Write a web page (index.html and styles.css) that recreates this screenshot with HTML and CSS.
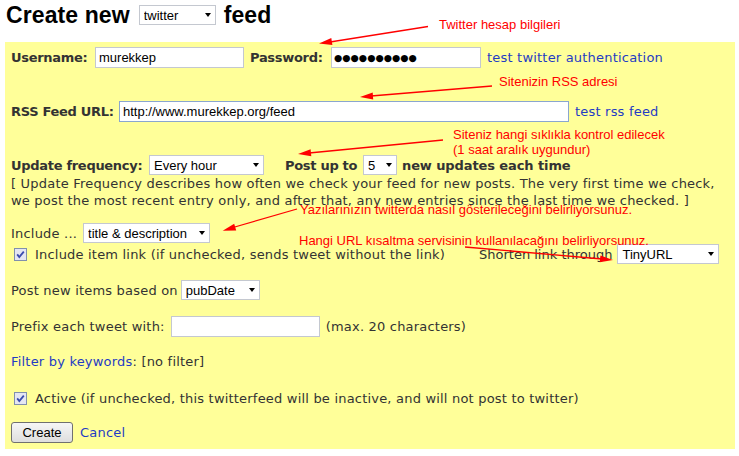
FILE: index.html
```html
<!DOCTYPE html>
<html>
<head>
<meta charset="utf-8">
<title>Create new twitter feed</title>
<link rel="stylesheet" href="styles.css">
</head>
<body>
<div class="page">
  <h1 class="title">
    <span class="t-create">Create new</span>
    <span class="sel sel-type"><select><option>twitter</option></select></span>
    <span class="t-feed">feed</span>
  </h1>

  <form class="panel">
    <div class="row r-user">
      <label class="lbl lbl-user">Username:</label>
      <input class="txt w-user" type="text" value="murekkep">
      <label class="lbl lbl-pass">Password:</label>
      <input class="txt w-pass dots" type="text" value="●●●●●●●●●●">
      <a class="lnk lnk-auth" href="#">test twitter authentication</a>
    </div>

    <div class="row r-rss">
      <label class="lbl lbl-rss">RSS Feed URL:</label>
      <input class="txt w-url focus" type="text" value="http://www.murekkep.org/feed">
      <a class="lnk lnk-rss" href="#">test rss feed</a>
    </div>

    <div class="row r-freq">
      <label class="lbl lbl-freq">Update frequency:</label>
      <span class="sel sel-freq"><select><option>Every hour</option></select></span>
      <span class="lbl lbl-post">Post up to</span>
      <span class="sel sel-num"><select><option>5</option></select></span>
      <span class="lbl lbl-new">new updates each time</span>
    </div>
    <p class="desc">[ Update Frequency describes how often we check your feed for new posts. The very first time we check,<br>we post the most recent entry only, and after that, any new entries since the last time we checked. ]</p>

    <div class="row r-include">
      <span class="plain">Include ...</span>
      <span class="sel sel-incl"><select><option>title &amp; description</option></select></span>
    </div>

    <div class="row r-link">
      <span class="cb"><svg width="13" height="13" viewBox="0 0 13 13"><rect x="0.5" y="0.5" width="12" height="12" fill="#e4e6f2" stroke="#8190ad"/><path d="M3.2 6.4 L5.3 9 L9.8 3.6" stroke="#3a4cae" stroke-width="1.8" fill="none"/></svg></span>
      <span class="plain incl-text">Include item link (if unchecked, sends tweet without the link)</span>
      <span class="plain shorten">Shorten link through</span>
      <span class="sel sel-short"><select><option>TinyURL</option></select></span>
    </div>

    <div class="row r-post">
      <span class="plain">Post new items based on</span>
      <span class="sel sel-pub"><select><option>pubDate</option></select></span>
    </div>

    <div class="row r-prefix">
      <span class="plain">Prefix each tweet with:</span>
      <input class="txt w-prefix" type="text" value="">
      <span class="plain max">(max. 20 characters)</span>
    </div>

    <div class="row r-filter">
      <span class="plain"><a class="lnk" href="#">Filter by keywords</a>: [no filter]</span>
    </div>

    <div class="row r-active">
      <span class="cb"><svg width="13" height="13" viewBox="0 0 13 13"><rect x="0.5" y="0.5" width="12" height="12" fill="#e4e6f2" stroke="#8190ad"/><path d="M3.2 6.4 L5.3 9 L9.8 3.6" stroke="#3a4cae" stroke-width="1.8" fill="none"/></svg></span>
      <span class="plain">Active (if unchecked, this twitterfeed will be inactive, and will not post to twitter)</span>
    </div>

    <div class="row r-btn">
      <button class="btn" type="button">Create</button>
      <a class="lnk cancel" href="#">Cancel</a>
    </div>
  </form>

  <svg class="arrows" width="739" height="456" viewBox="0 0 739 456">
    <g stroke="#ff0000" stroke-width="1.3" fill="none">
      <line x1="428" y1="26.5" x2="330" y2="42"/>
      <line x1="492" y1="86" x2="371" y2="96"/>
      <line x1="443" y1="140" x2="309" y2="153"/>
      <line x1="297" y1="209" x2="233" y2="227.5"/>
      <line x1="465" y1="247" x2="602" y2="259"/>
    </g>
    <g fill="#ff0000">
      <polygon points="319,43.5 331.3,38 332.4,44.9"/>
      <polygon points="360,97 372.7,92.4 373.2,99.4"/>
      <polygon points="298,154 310.6,149.3 311.3,156.2"/>
      <polygon points="222.7,230.7 234.2,223.7 236.2,230.5"/>
      <polygon points="613,260 599.7,262.3 600.4,255.4"/>
    </g>
  </svg>

  <div class="note n1">Twitter hesap bilgileri</div>
  <div class="note n2">Sitenizin RSS adresi</div>
  <div class="note n3">Siteniz hangi sıklıkla kontrol edilecek<br>(1 saat aralık uygundur)</div>
  <div class="note n4">Yazılarınızın twitterda nasıl gösterileceğini belirliyorsunuz.</div>
  <div class="note n5">Hangi URL kısaltma servisinin kullanılacağını belirliyorsunuz.</div>
</div>
</body>
</html>
```

FILE: styles.css
```css
html, body {
  margin: 0;
  padding: 0;
  background: #ffffff;
}

.page {
  position: relative;
  width: 739px;
  height: 456px;
  overflow: hidden;
  font-family: "DejaVu Sans", Verdana, sans-serif;
  font-size: 13px;
  letter-spacing: 0.2px;
  color: #333333;
}

/* ---------- header ---------- */
.title {
  display: flex;
  align-items: center;
  height: 30px;
  margin: 0 0 12px 0;
  padding-left: 6px;
  font-family: "Liberation Sans", Arial, sans-serif;
  font-size: 23px;
  font-weight: bold;
  letter-spacing: 0.1px;
  color: #000;
  line-height: 26px;
}
.sel-type { margin: 0 8px 0 9px; }
.sel-type select { width: 77px; }

/* ---------- panel ---------- */
.panel {
  width: 730px;
  margin: 0 0 0 5px;
  box-sizing: border-box;
  padding: 5px 6px 6px 6px;
  background: #ffff99;
}

.row {
  display: flex;
  align-items: center;
  white-space: nowrap;
}

.lbl {
  font-weight: bold;
  letter-spacing: -0.3px;
  color: #333;
  flex: none;
}
.lbl-user { width: 84px; }
.lbl-pass { width: 81px; margin-left: 6px; }
.lbl-rss { width: 108px; }
.lbl-freq { width: 138px; }
.lbl-post { width: 78px; margin-left: 21px; }

.plain { color: #333; }

.lnk {
  color: #1f3cc4;
  text-decoration: none;
}

/* inputs */
.txt {
  box-sizing: border-box;
  height: 21px;
  margin: 0;
  padding: 0 0 0 3px;
  border: 1px solid #c4c8d0;
  background: #fff;
  font-family: "Liberation Sans", Arial, sans-serif;
  font-size: 13px;
  letter-spacing: 0;
  color: #000;
  outline: none;
}
.txt.focus { border-color: #8aa6cf; padding-left: 3px; }
.dots {
  font-family: "DejaVu Sans", sans-serif;
  font-size: 9.5px;
  padding-left: 2px;
}

/* selects */
.sel {
  position: relative;
  display: inline-flex;
  flex: none;
}
.sel select {
  -webkit-appearance: none;
  appearance: none;
  box-sizing: border-box;
  height: 20px;
  margin: 0;
  padding: 0 0 0 4px;
  border: 1px solid #c4c8d0;
  border-radius: 0;
  background: #fff;
  font-family: "Liberation Sans", Arial, sans-serif;
  font-size: 13px;
  font-weight: normal;
  letter-spacing: 0;
  color: #000;
}
.sel::after {
  content: "";
  position: absolute;
  right: 5px;
  top: 8px;
  width: 0;
  height: 0;
  border-left: 3.5px solid transparent;
  border-right: 3.5px solid transparent;
  border-top: 4px solid #000;
  pointer-events: none;
}

/* row 1 */
.r-user { height: 21px; }
.w-user { width: 149px; }
.w-pass { width: 150px; }
.lnk-auth { margin-left: 6px; }

/* row 2 */
.r-rss { height: 21px; margin-top: 33px; }
.w-url { width: 450px; }
.lnk-rss { margin-left: 6px; }

/* row 3 */
.r-freq { height: 20px; margin-top: 33px; }
.sel-freq select { width: 115px; }
.sel-num select { width: 34px; }
.lbl-new { margin-left: 5px; letter-spacing: -0.1px; }

.desc {
  margin: 0;
  line-height: 17px;
  white-space: nowrap;
  color: #333;
}

/* include */
.r-include { height: 20px; margin-top: 14px; }
.sel-incl { margin-left: 6px; }
.sel-incl select { width: 127px; }

.r-link { height: 20px; margin-top: 1px; }
.cb {
  display: inline-flex;
  flex: none;
  width: 13px;
  height: 13px;
  margin-left: 3px;
}
.incl-text { margin-left: 8px; width: 444px; flex: none; }
.shorten { letter-spacing: 0; }
.sel-short { margin-left: 5px; }
.sel-short select { width: 102px; }

.r-post { height: 20px; margin-top: 16px; }
.sel-pub { margin-left: 3px; }
.sel-pub select { width: 79px; }

.r-prefix { height: 21px; margin-top: 16px; }
.w-prefix { width: 149px; margin-left: 6px; }
.max { margin-left: 6px; }

.r-filter { height: 17px; margin-top: 16px; }

.r-active { height: 17px; margin-top: 20px; }
.r-active .plain { margin-left: 8px; }

.r-btn { height: 21px; margin-top: 15px; }
.btn {
  box-sizing: border-box;
  width: 62px;
  height: 21px;
  margin: 0;
  padding: 0;
  border: 1px solid #707070;
  border-radius: 3px;
  background: linear-gradient(#f6f6f6, #dedede);
  font-family: "Liberation Sans", Arial, sans-serif;
  font-size: 13px;
  letter-spacing: 0;
  color: #000;
}
.cancel { margin-left: 7px; }

/* ---------- annotations ---------- */
.arrows {
  position: absolute;
  top: 0;
  left: 0;
  pointer-events: none;
}

.note {
  position: absolute;
  font-family: "Liberation Sans", Arial, sans-serif;
  font-size: 13px;
  line-height: 15px;
  letter-spacing: 0;
  color: #ff0000;
  white-space: nowrap;
}
.n1 { left: 439px; top: 17px; }
.n2 { left: 499px; top: 74px; }
.n3 { left: 453px; top: 127px; }
.n4 { left: 300px; top: 202px; }
.n5 { left: 299px; top: 233px; }
```
